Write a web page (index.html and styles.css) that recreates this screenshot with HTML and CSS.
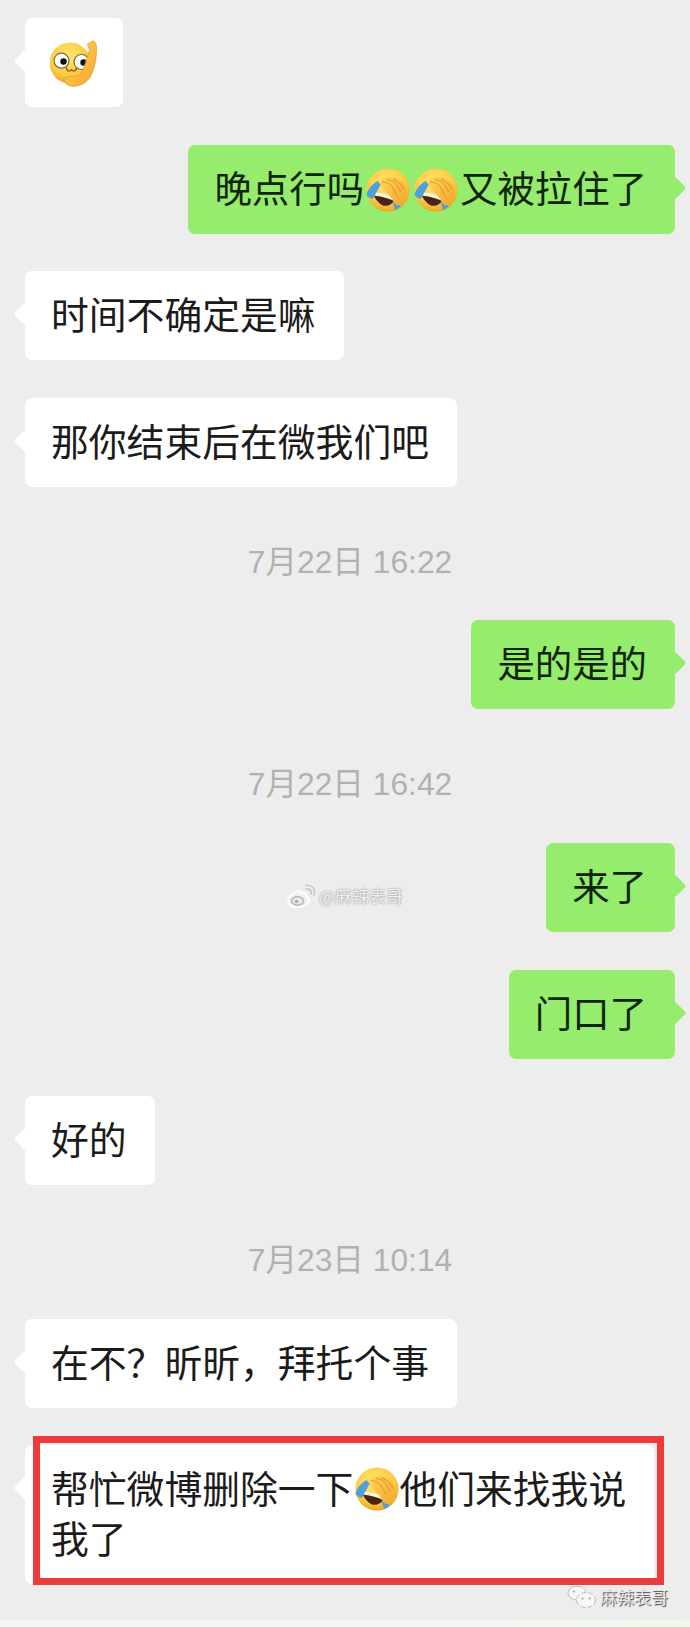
FILE: index.html
```html
<!DOCTYPE html>
<html lang="zh-CN">
<head>
    <meta charset="UTF-8">
    <title>聊天记录</title>
    <link rel="stylesheet" href="styles.css">
</head>
<body>
<svg class="defs" width="0" height="0">
    <defs>
        <radialGradient id="skin" cx="45%" cy="35%" r="70%">
            <stop offset="0" stop-color="#ffe873"/>
            <stop offset="0.65" stop-color="#fbcb42"/>
            <stop offset="1" stop-color="#ee9a1c"/>
        </radialGradient>
        <linearGradient id="palm" x1="0" y1="0" x2="1" y2="1">
            <stop offset="0" stop-color="#ffd75c"/>
            <stop offset="1" stop-color="#f3a52b"/>
        </linearGradient>
        <symbol id="facepalm" viewBox="0 0 42 42">
            <circle cx="21" cy="21" r="20.6" fill="url(#skin)"/>
            <path d="M7 24 C13 25 22 27 27 30 C26 34 22 36.500 17 36 C12 34 8 29 7 24Z" fill="#4a2410"/>
            <path d="M7 23 C13 23.500 22 25.500 28 29 L27 31.500 C21 28.500 14 27 8 26.500Z" fill="#fbf3e2"/>
            <path d="M11 12.500 L14 16 L6.500 29.500 C3.500 28.500 1.500 27.500 .5 25.500 C2 20 6 15.500 11 12.500Z" fill="#4f9fdc"/>
            <path d="M25.500 33.500 L29 31.500 L33 37 C31.500 38.500 29.500 39.500 28 40Z" fill="#4f9fdc"/>
            <path d="M12.500 14 C15 10 19 8 23 8.500 C30 8.500 37 13 38.500 20 C39 27 36 32 32 35 C29 36.500 27 33 25 29.500 C22 25 17 21 12.500 14Z" fill="url(#palm)"/>
            <path d="M16 13 C21 13 26 17 29 26 M20.500 11 C26 11.500 30 15 33 23 M26 10.500 C30 12 34 15.500 36 20" fill="none" stroke="#d8871a" stroke-width="0.8" stroke-linecap="round"/>
        </symbol>
        <symbol id="think" viewBox="0 0 48 48">
            <circle cx="20" cy="23" r="20.500" fill="url(#skin)"/>
            <circle cx="11.500" cy="20.700" r="7.500" fill="#fff" stroke="#7e6b44" stroke-width="1.200"/>
            <circle cx="31.500" cy="22" r="7.500" fill="#fff" stroke="#7e6b44" stroke-width="1.200"/>
            <circle cx="13.500" cy="21.500" r="3.200" fill="#111"/>
            <circle cx="33.500" cy="22.500" r="3.200" fill="#111"/>
            <path d="M16.500 27.500 C16.500 32 21 32 21.500 29 C22 32 26.500 32 26.500 27.500" fill="none" stroke="#a8620f" stroke-width="1.500" stroke-linecap="round"/>
            <path d="M37.500 4 L43 .8 C46.500 2 47 8 46.500 12 C46 22 43.500 32 39.500 38 C35 44 28 47 21 46 C14.500 45 13 40 16 37.500 C20 35.500 26 37 31 35 C34 28 37 18 39.500 10Z" fill="url(#palm)" stroke="#e59a1f" stroke-width="0.7"/>
        </symbol>
    </defs>
</svg>

<div class="chat">
    <div class="bubble left"><svg class="emoji big"><use href="#think"/></svg></div>
    <div class="bubble right">晚点行吗<svg class="emoji"><use href="#facepalm"/></svg><svg class="emoji"><use href="#facepalm"/></svg>又被拉住了</div>
    <div class="bubble left">时间不确定是嘛</div>
    <div class="bubble left">那你结束后在微我们吧</div>
    <div class="time">7月22日 16:22</div>
    <div class="bubble right">是的是的</div>
    <div class="time">7月22日 16:42</div>
    <div class="bubble right">来了</div>
    <div class="bubble right">门口了</div>
    <div class="bubble left">好的</div>
    <div class="time">7月23日 10:14</div>
    <div class="bubble left">在不？昕昕，拜托个事</div>
    <div class="bubble left">帮忙微博删除一下<svg class="emoji"><use href="#facepalm"/></svg>他们来找我说<br>我了</div>

    <div class="redbox"></div>

    <div class="mark weibo">
        <svg class="mark-icon" viewBox="0 0 30 24">
            <path d="M12 7 C6 9 2 14 2 17 C2 21 7 23 12 23 C18 23 23 20 23 16 C23 14 21 13 20 12.500 C21 10 20 8.500 17 9 L14 10 C14.500 7.500 14 6.500 12 7Z" fill="none" stroke="#fff" stroke-width="1.800"/>
            <ellipse cx="11.500" cy="17" rx="6" ry="4.200" fill="none" stroke="#b9b9b9" stroke-width="1.500"/>
            <circle cx="10.500" cy="17.500" r="1.800" fill="#a8a8a8"/>
            <path d="M20 5 C24 4.500 26 7 25 10 M20 1.500 C26 .5 30 5 28 11" fill="none" stroke="#c4c4c4" stroke-width="1.500" stroke-linecap="round"/>
        </svg>
        <span>@麻辣表哥</span>
    </div>

    <div class="mark wechat">
        <svg class="mark-icon" viewBox="0 0 30 24">
            <ellipse cx="10" cy="8" rx="9" ry="7" fill="#f7f7f7" stroke="#bdbdbd" stroke-width="1"/>
            <ellipse cx="19" cy="15" rx="9.500" ry="7.500" fill="#f7f7f7" stroke="#bdbdbd" stroke-width="1" stroke-dasharray="5 2"/>
            <circle cx="7" cy="6.500" r="1" fill="#999"/>
            <circle cx="15.500" cy="13.500" r="1" fill="#999"/>
            <circle cx="22.500" cy="13.500" r="1" fill="#999"/>
        </svg>
        <span>麻辣表哥</span>
    </div>
</div>
<div class="strip"></div>
</body>
</html>
```

FILE: styles.css
```css
*{
    box-sizing: border-box;
}
body{
    margin: 0;
    width: 690px;
    height: 1627px;
    overflow: hidden;
    background: #ededee;
    font-family: "Noto Sans CJK SC", "Liberation Sans", sans-serif;
}
.defs{
    position: absolute;
}
.chat{
    position: relative;
    display: flex;
    flex-direction: column;
    gap: 37.7px;
    height: 1620px;
    padding: 18px 15px 0 25px;
}
.bubble{
    position: relative;
    display: block;
    min-height: 89px;
    max-width: 631px;
    padding: 20px 28px 19px 26px;
    border-radius: 7px;
    font-family: "Liberation Sans", "Noto Sans CJK SC", sans-serif;
    font-size: 37.8px;
    line-height: 50px;
    color: #1b1b1b;
}
.bubble:before{
    content: "";
    position: absolute;
    top: 35px;
    width: 16px;
    height: 16px;
    border-radius: 2px;
    transform: rotate(45deg);
    background: inherit;
}
.left{
    align-self: flex-start;
    background: #fff;
}
.left:before{
    left: -8px;
}
.right{
    align-self: flex-end;
    background: #95ec6d;
    font-size: 37.4px;
    color: #10240a;
}
.right:before{
    right: -8px;
}
.emoji{
    width: 44px;
    height: 44px;
    margin: 0 2px;
    vertical-align: -9px;
}
.left .emoji{
    margin: 0 0 0 2px;
    vertical-align: -8px;
}
.emoji.big{
    display: block;
    width: 48px;
    height: 48px;
    margin: 2px -3px 0 -1px;
}
.time{
    height: 58px;
    padding-top: 16px;
    text-align: center;
    font-family: "Liberation Sans", "Noto Sans CJK SC", sans-serif;
    font-size: 31.7px;
    line-height: 43px;
    color: #b1b1b1;
}
.redbox{
    position: absolute;
    left: 33px;
    top: 1436px;
    width: 631px;
    height: 149px;
    border: 7px solid #ef3a3c;
}
.mark{
    position: absolute;
    display: flex;
    align-items: center;
    gap: 3px;
    font-size: 17px;
    line-height: 22px;
}
.mark-icon{
    width: 30px;
    height: 24px;
}
.weibo{
    left: 286px;
    top: 884px;
    color: #f0f0f0;
    text-shadow: 0 0 2px #7c7c7c;
}
.wechat{
    left: 567px;
    top: 1585px;
    color: #e8e8e8;
    text-shadow: 1px 1px 1px #444;
}
.strip{
    height: 7px;
    background: linear-gradient(90deg, #f5f6f4 70%, #eef8e8);
}
```
